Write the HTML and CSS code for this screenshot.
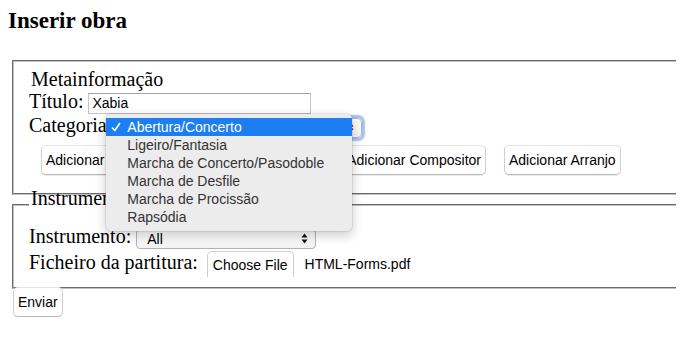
FILE: index.html
```html
<!DOCTYPE html>
<html lang="pt">
<head>
  <meta charset="UTF-8">
  <title>Inserir obra</title>
  <meta name="viewport" content="width=device-width, initial-scale=1.0">
  <link rel="stylesheet" href="styles.css">
</head>
<body>
  <h2 class="page-title">Inserir obra</h2>
  <form class="work-form" autocomplete="off">
    <fieldset class="box box-meta">
      <div class="box-name">Metainformação</div>
      <div class="field">
        <label class="field-label">Título:</label>
        <input class="text-input" type="text" name="titulo" value="Xabia">
      </div>
      <div class="field field-cat">
        <label class="field-label">Categoria:</label>
        <div class="picker picker-cat">
          <span class="picker-value">Abertura/Concerto</span>
          <svg class="picker-arrows" viewBox="0 0 7 11"><polygon points="0.5,4.5 3.5,0.5 6.5,4.5"/><polygon points="0.5,6.5 3.5,10.5 6.5,6.5"/></svg>
          <!-- open dropdown -->
          <ul class="picker-menu">
            <li class="picker-option is-selected">
              <span class="check-slot"><svg class="check" viewBox="0 0 10 10"><polyline points="1,5.5 3.8,8.5 9,1"/></svg></span>Abertura/Concerto
            </li>
            <li class="picker-option"><span class="check-slot"></span>Ligeiro/Fantasia</li>
            <li class="picker-option"><span class="check-slot"></span>Marcha de Concerto/Pasodoble</li>
            <li class="picker-option"><span class="check-slot"></span>Marcha de Desfile</li>
            <li class="picker-option"><span class="check-slot"></span>Marcha de Procissão</li>
            <li class="picker-option"><span class="check-slot"></span>Rapsódia</li>
          </ul>
        </div>
      </div>
      <div class="actions">
        <button type="button" class="btn">Adicionar Categoria</button>
        <button type="button" class="btn">Adicionar Intérprete</button>
        <button type="button" class="btn">Adicionar Compositor</button>
        <button type="button" class="btn">Adicionar Arranjo</button>
      </div>
    </fieldset>
    <fieldset class="box box-instr">
      <legend class="box-legend">Instrumentos</legend>
      <div class="field field-instr">
        <label class="field-label">Instrumento:</label>
        <div class="picker picker-instr">
          <span class="picker-value">All</span>
          <svg class="picker-arrows" viewBox="0 0 7 11"><polygon points="0.5,4.5 3.5,0.5 6.5,4.5"/><polygon points="0.5,6.5 3.5,10.5 6.5,6.5"/></svg>
        </div>
      </div>
      <div class="field field-file">
        <label class="field-label">Ficheiro da partitura:</label>
        <span class="file-btn">Choose File</span>
        <span class="file-name">HTML-Forms.pdf</span>
      </div>
    </fieldset>
    <button type="submit" class="btn btn-submit">Enviar</button>
  </form>
</body>
</html>
```
FILE: styles.css
```css
html {
  overflow: hidden;
}
body {
  margin: 8px;
  background: #fff;
  color: #000;
  font-family: "Liberation Serif", "Times New Roman", serif;
  font-size: 20px;
}
.page-title {
  margin: 0 0 26px;
  font-size: 23px;
  line-height: 26px;
  font-weight: bold;
}
.work-form {
  margin: 0;
}
/* fieldsets */
.box {
  margin: 0 -40px 0 4px;
  border: 2px groove #c0c0c0;
  padding: 6px 15px 18px;
  min-width: 0;
}
.box-name {
  line-height: 23px;
  padding-left: 2px;
}
.box-instr {
  margin-top: -8px;
  padding: 0 15px 10px;
}
.box-legend {
  padding: 0 2px 13px;
  line-height: 23px;
}
/* rows */
.field {
  display: flex;
  align-items: center;
  gap: 5px;
  height: 24px;
}
.field-cat { height: 25px; }
.field-instr { height: 25px; margin-top: 3px; }
.field-file { height: 26px; }
.field-label {
  line-height: 23px;
  margin-bottom: 4px;
  white-space: nowrap;
}
.text-input {
  box-sizing: border-box;
  width: 223px;
  height: 21px;
  margin: 0;
  padding: 0 3px;
  border: 1px solid #c4c4c4;
  border-top-color: #a3a3a3;
  font: 14px "Liberation Sans", Arial, sans-serif;
  color: #000;
  outline: none;
}
/* selects */
.picker {
  position: relative;
  box-sizing: border-box;
  height: 20px;
  display: flex;
  align-items: center;
  justify-content: space-between;
  padding: 0 7px 0 10px;
  border: 1px solid #b3b3b3;
  border-radius: 4px;
  background: linear-gradient(#ffffff, #f3f3f3);
  font: 14px "Liberation Sans", Arial, sans-serif;
}
.picker-cat {
  width: 245px;
  box-shadow: 0 0 1px 3px rgba(98, 160, 240, 0.6);
}
.picker-instr {
  width: 180px;
}
.picker-arrows {
  width: 7px;
  height: 11px;
  fill: #111;
}
.picker-menu {
  position: absolute;
  left: -12px;
  top: -5px;
  z-index: 2;
  width: 246px;
  margin: 0;
  padding: 4px 0 5px;
  list-style: none;
  background: #ececec;
  border-radius: 5px;
  box-shadow: 0 0 0 1px rgba(0, 0, 0, 0.07), 0 4px 12px rgba(0, 0, 0, 0.22);
}
.picker-option {
  display: flex;
  align-items: center;
  height: 18px;
  padding-left: 5px;
  color: #333;
  white-space: nowrap;
}
.picker-option.is-selected {
  background: #1c7ef0;
  color: #fff;
}
.check-slot {
  flex: none;
  width: 16px;
  display: flex;
  align-items: center;
}
.check {
  width: 10px;
  height: 10px;
  fill: none;
  stroke: #fff;
  stroke-width: 1.6;
}
/* buttons */
.actions {
  display: flex;
  gap: 18px;
  margin: 5px 0 0 12px;
}
.btn {
  box-sizing: border-box;
  height: 30px;
  margin: 0;
  padding: 0 4px;
  background: #fff;
  color: #000;
  border: 1px solid #d0d0d0;
  border-top-color: #e4e4e4;
  border-bottom-color: #b8b8b8;
  border-radius: 5px;
  box-shadow: 0 1px 1px rgba(0, 0, 0, 0.08);
  font: 14px "Liberation Sans", Arial, sans-serif;
  white-space: nowrap;
}
.btn-submit {
  display: block;
  margin: -2px 0 0 5px;
}
.file-btn {
  box-sizing: border-box;
  display: flex;
  align-items: center;
  height: 26px;
  margin-left: 4px;
  padding: 0 5px;
  border: 1px solid #cfcfcf;
  border-bottom: none;
  border-radius: 5px 5px 0 0;
  background: #fff;
  font: 14px "Liberation Sans", Arial, sans-serif;
}
.file-name {
  margin-left: 6px;
  font: 14px "Liberation Sans", Arial, sans-serif;
}
```
